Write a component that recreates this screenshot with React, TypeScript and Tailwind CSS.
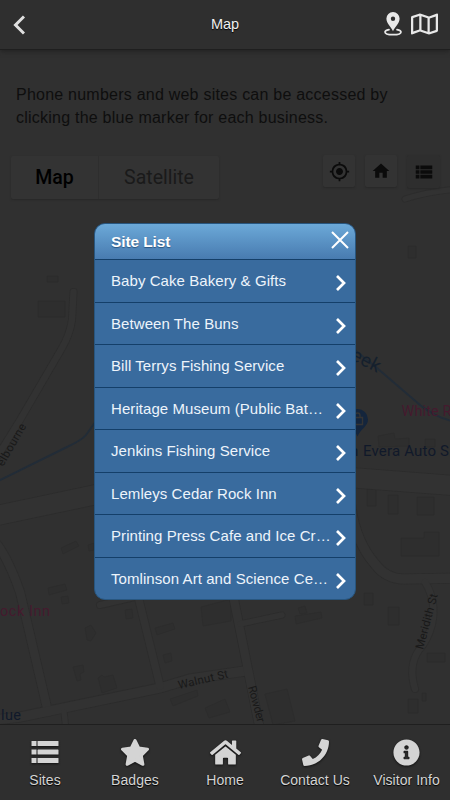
import { FaHome, FaInfoCircle, FaPhone, FaRegMap } from 'react-icons/fa'
import { MdGpsFixed, MdHome, MdViewList } from 'react-icons/md'

const sites = [
  'Baby Cake Bakery & Gifts',
  'Between The Buns',
  'Bill Terrys Fishing Service',
  'Heritage Museum (Public Bat…',
  'Jenkins Fishing Service',
  'Lemleys Cedar Rock Inn',
  'Printing Press Cafe and Ice Cr…',
  'Tomlinson Art and Science Ce…',
]

const roads = [
  { d: 'M73.5 292 L72 320 Q70 334 62 348 L20 420 L-6 462', w: 8 },
  { d: 'M-10 517 L94 495 L240 466 L356 478 L460 486', w: 21 },
  { d: 'M-4 543 Q8 558 20 592 L48 712', w: 10 },
  { d: 'M-6 720 L20 717 L160 688 L190 679 L245 671', w: 11 },
  { d: 'M138 596 L160 686', w: 9 },
  { d: 'M100 605 L135 597', w: 8 },
  { d: 'M64 712 L66 730', w: 7 },
  { d: 'M232 590 L245 655 L261 735', w: 10 },
  { d: 'M240 624 L282 615', w: 7 },
  { d: 'M350 500 Q354 540 375 564 Q386 579 404 579 L460 578', w: 11 },
  { d: 'M425 582 Q437 602 432 624 Q428 640 419 650 Q408 666 415 689', w: 8 },
  { d: 'M405 199 Q430 191 460 189', w: 7 },
]

const buildings = [
  'M47 276h11v6h-11z',
  'M38 301h27v16h-27z',
  'M408 246h8v12h-8z',
  'M378 436l16 -3 1 6 14 -1v8l-30 1z',
  'M425 439h10v8h-10z',
  'M367 489h9v17h-9z',
  'M388 495h10v19h-10z',
  'M417 497h17v18h-17z',
  'M61 548l15 -7 3 5 -16 8z',
  'M88 545l6 -2v7l-5 1z',
  'M48 588l17 -4 2 6 -18 5z',
  'M61 597l7 -1 1 7 -7 1z',
  'M85 628l6 -3 5 8 -5 8 -4 -1z',
  'M125 610l7 -1 1 9 -7 1z',
  'M98 678l4 -3 2 2 9 -2 4 13 -15 5z',
  'M73 667l10 -2 1 7 -4 2 1 6 -4 1z',
  'M155 628l18 -5 2 6 -18 6z',
  'M163 655l8 -2 1 8 -7 2z',
  'M201 607l30 -8v22l-28 5z',
  'M170 699l27 -9 1 6 -25 10z',
  'M205 708l20 -9 5 13 -21 6z',
  'M401 538h23v-6h15v24h-38z',
  'M364 593h9v12h-9z',
  'M388 607h11v18h-11z',
  'M427 653h18v9h-18z',
  'M422 693h4v8h-4z',
  'M408 699h10v14h-10z',
  'M295 616l26 -4 1 6 -26 6z',
  'M298 608l7 -2 2 7 -7 1z',
  'M265 694l22 -5 8 32 -22 4z',
]

const navItems = [
  { label: 'Sites', icon: <ListIcon /> },
  { label: 'Badges', icon: <StarIcon /> },
  { label: 'Home', icon: <FaHome className="size-[31px]" /> },
  { label: 'Contact Us', icon: <FaPhone className="size-[27px]" /> },
  { label: 'Visitor Info', icon: <FaInfoCircle className="size-[27px]" /> },
]

function ListIcon() {
  return (
    <svg viewBox="0 0 28 24" className="w-[28px] h-[24px]" fill="currentColor">
      {[1, 9.5, 18].map((y) => (
        <g key={y}>
          <rect x="0.5" y={y} width="5" height="5" />
          <rect x="6.5" y={y} width="21" height="5" rx="0.6" />
        </g>
      ))}
    </svg>
  )
}

function StarIcon() {
  return (
    <svg viewBox="0 0 30 29" className="w-[30px] h-[29px]" fill="currentColor" stroke="currentColor" strokeWidth="3" strokeLinejoin="round">
      <path d="M15 2.500 L18.700 10 L27.500 11.300 L21.300 17.400 L22.900 26.300 L15 22.200 L7.100 26.300 L8.700 17.400 L2.500 11.300 L11.300 10 Z" />
    </svg>
  )
}

function PinIcon() {
  return (
    <svg viewBox="0 0 18 24" className="w-[18px] h-[24px]">
      <path d="M5 17.600C2.700 18.100 1 18.900 1 19.900c0 1.700 3.600 2.800 8 2.800s8-1.100 8-2.800c0-1-1.700-1.800-4-2.300" fill="none" stroke="#e8e8e8" strokeWidth="1.7" strokeLinecap="round" />
      <path fillRule="evenodd" d="M9 0a6.600 6.600 0 0 0-6.600 6.600C2.400 11.500 7 15 9 19.300 11 15 15.600 11.500 15.600 6.600A6.600 6.600 0 0 0 9 0Zm0 4.500a2.200 2.200 0 1 1 0 4.400 2.200 2.200 0 0 1 0-4.400Z" fill="#e8e8e8" />
    </svg>
  )
}

function MapCanvas() {
  return (
    <svg viewBox="0 146 450 578" className="absolute inset-0 w-full h-full" fontFamily="Roboto, sans-serif">
      {buildings.map((d) => (
        <path key={d} d={d} fill="#2e2e2e" stroke="#2c2c2c" strokeWidth="0.8" />
      ))}
      <g fill="none" strokeLinecap="round">
        {roads.map((r) => (
          <path key={r.d} d={r.d} stroke="#2c2c2c" strokeWidth={r.w} />
        ))}
        {roads.map((r) => (
          <path key={r.d} d={r.d} stroke="#323232" strokeWidth={r.w - 1.6} />
        ))}
        {/* Creek */}
        <path d="M-2 481 L67 447 Q82 440 86 435 L96 421" stroke="#222c37" strokeWidth="2" />
        <path d="M340 338 L377 368 L420 405 Q435 417 452 421" stroke="#222c37" strokeWidth="2" />
      </g>
      <text transform="translate(344 356) rotate(27)" fontSize="19" textLength="37" fill="#15202d">reek</text>
      <text transform="translate(3 467) rotate(-60)" fontSize="11.5" textLength="47" fill="#191919">elbourne</text>

      {/* Shop marker */}
      <path d="M357.500 409a10.500 10.500 0 0 1 10.500 10.500c0 7-7.500 9-10.500 17-3-8-10.500-10-10.500-17a10.500 10.500 0 0 1 10.500-10.500Z" fill="#14253c" />
      <path d="M352.500 417.500h10v7h-10zM355 417v-1.500a2.500 2.500 0 0 1 5 0V417" fill="none" stroke="#343434" strokeWidth="1.400" />

      <text x="401.5" y="416" fontSize="14.5" textLength="50" fill="#451a2e">White R</text>
      <text x="350" y="455.5" fontSize="15" textLength="7" fill="#10192a">n</text>
      <text x="363" y="455.5" fontSize="15" textLength="86" fill="#10192a">Evera Auto S</text>
      <text x="0" y="616" fontSize="14.5" textLength="50" fill="#451a2e">ock Inn</text>
      <text x="1" y="720" fontSize="14.5" textLength="20" fill="#10192a">lue</text>
      <text transform="translate(179 689) rotate(-13)" fontSize="11.5" textLength="51" fill="#191919">Walnut St</text>
      <text transform="translate(248 687) rotate(75)" fontSize="11.5" textLength="37" fill="#191919">Rowder</text>
      <text transform="translate(423 650) rotate(-75)" fontSize="11.5" textLength="57" fill="#191919">Meridith St</text>
    </svg>
  )
}

const SiteList = () => {
  return (
    <div className="absolute left-[94px] top-[223px] w-[262px] h-[377px] rounded-[11px] overflow-hidden bg-[#396b9e] border border-[#28567f]">
      <div className="h-[35px] flex items-center justify-between pl-4 pr-[6px] bg-linear-to-b from-[#6ca9d8] to-[#487bb0]">
        <h2 className="pt-px text-[15.5px] tracking-[-0.1px] font-bold text-white [text-shadow:0_1px_1px_#2b5580]">Site List</h2>
        <svg viewBox="0 0 18 18" className="size-[18px] -mt-[4px]" stroke="#fff" strokeWidth="2">
          <path d="M1 1 L17 17 M17 1 L1 17" />
        </svg>
      </div>
      <ul>
        {sites.map((site) => (
          <li key={site} className="h-[42.5px] flex items-center justify-between pl-4 pr-[9px] border-t border-[#143f69]">
            <span className="pt-px text-[15px] tracking-[0.07px] text-[#edf4fb] whitespace-nowrap">{site}</span>
            <svg viewBox="0 0 10 16" className="w-[10px] h-[16px] mt-[5px] shrink-0" fill="none" stroke="#fff" strokeWidth="2.7">
              <path d="M1 1 L8 8 L1 15" />
            </svg>
          </li>
        ))}
      </ul>
    </div>
  )
}

const App = () => {
  return (
    <div className="relative w-[450px] h-[800px] flex flex-col overflow-hidden bg-[#303030] font-['Liberation_Sans',Arial,sans-serif]">
      <header className="h-[50px] shrink-0 grid grid-cols-3 items-center bg-[#2f2f2f] border-b border-[#1f1f1f] shadow-[0_1px_5px_#202020] z-10">
        <svg viewBox="0 0 12 20" className="w-[12px] h-[20px] ml-[13px] mt-px" fill="none" stroke="#e0e0e0" strokeWidth="3">
          <path d="M11 1.500 L2.500 10 L11 18.500" />
        </svg>
        <h1 className="pt-px text-center text-[14.5px] text-[#f0f0f0] [text-shadow:0_1px_1px_#000]">Map</h1>
        <div className="flex items-center justify-end gap-[9px] pr-3 pb-px">
          <PinIcon />
          <FaRegMap className="w-[27px] h-[24px] text-[#e8e8e8]" />
        </div>
      </header>

      <main className="flex-1 flex flex-col">
        <div className="h-[96px] shrink-0 pt-[33px] pl-[16px]">
          <p className="text-[16px] leading-[23px] tracking-[0.23px] text-[#0e0e0e] whitespace-nowrap">
            Phone numbers and web sites can be accessed by<br />
            clicking the blue marker for each business.
          </p>
        </div>
        <section className="relative flex-1">
          <MapCanvas />
          <div className="relative flex justify-between pt-[9px] pl-[11px] pr-[10px]">
            <div className="flex h-[43px] mt-px rounded-xs bg-[#333] shadow-[0_1px_2px_#282828] font-[Roboto,sans-serif] text-[19.5px]">
              <button className="w-[88px] border-r border-[#2e2e2e] font-medium text-black">Map</button>
              <button className="w-[120px] text-[#1a1a1a]">Satellite</button>
            </div>
            <div className="flex gap-[10px] text-[#0b0b0b]">
              <button className="size-[32px] grid place-items-center rounded-xs bg-[#333] shadow-[0_1px_2px_#282828]">
                <MdGpsFixed className="size-[21px]" />
              </button>
              <button className="size-[32px] grid place-items-center rounded-xs bg-[#333] shadow-[0_1px_2px_#282828]">
                <MdHome className="size-[20px]" />
              </button>
              <button className="size-[33px] grid place-items-center rounded-xs bg-[#2e2e2e] shadow-[0_1px_2px_#282828]">
                <MdViewList className="size-[22px]" />
              </button>
            </div>
          </div>
        </section>
      </main>

      <nav className="h-[76px] shrink-0 grid grid-cols-5 bg-[#2f2f2f] border-t border-[#1f1f1f] z-10">
        {navItems.map((item) => (
          <div key={item.label} className="flex flex-col items-center pt-[11px] last:pl-[3px] text-[#d4d4d4]">
            <div className="h-8 flex items-center drop-shadow-[0_1px_1px_#111]">{item.icon}</div>
            <span className="mt-[2px] text-[14px] leading-5 tracking-[0.05px] whitespace-nowrap [text-shadow:0_1px_1px_#000]">{item.label}</span>
          </div>
        ))}
      </nav>

      <SiteList />
    </div>
  )
}

export default App
